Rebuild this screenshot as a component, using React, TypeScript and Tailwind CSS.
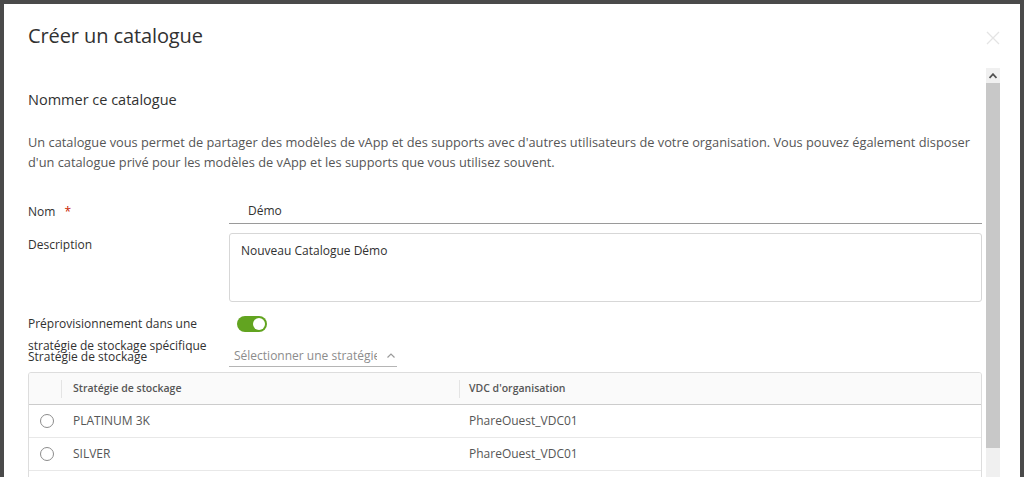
import React from 'react';

const font = { fontFamily: '"Open Sans", "Liberation Sans", sans-serif' };

const rows = [
  { name: 'PLATINUM 3K', vdc: 'PhareOuest_VDC01' },
  { name: 'SILVER', vdc: 'PhareOuest_VDC01' },
  { name: 'GOLD', vdc: 'PhareOuest_VDC01' },
];

const App = () => {
  return (
    <div className="w-[1024px] h-[477px] overflow-hidden bg-[#4a4a4a] pt-[4px] px-[4px]" style={font}>
      <div className="bg-white h-[500px] flex flex-col">
        {/* Header */}
        <div className="h-[64px] shrink-0 flex items-center justify-between pl-[24px] pr-[20px]">
          <h1 className="text-[20px] text-[#313131] font-normal tracking-[-0.1px]">Créer un catalogue</h1>
          <svg width="14" height="14" viewBox="0 0 14 14" className="mt-[4px]">
            <path d="M1 1 L13 13 M13 1 L1 13" stroke="#e4e4e4" strokeWidth="1.3" />
          </svg>
        </div>

        {/* Body */}
        <div className="flex flex-1 min-h-0">
          <div className="flex-1 pl-[24px] pr-[4px] text-[#565656]">
            <h2 className="text-[14.5px] text-[#313131] mt-[22px] leading-[20px]">Nommer ce catalogue</h2>
            <p className="text-[12.8px] leading-[20px] mt-[22px] pr-[6px]">
              Un catalogue vous permet de partager des modèles de vApp et des supports avec d'autres utilisateurs de
              votre organisation. Vous pouvez également disposer d'un catalogue privé pour les modèles de vApp et les
              supports que vous utilisez souvent.
            </p>

            {/* Form */}
            <div className="mt-[30px] text-[12px] text-[#313131]">
              <div className="flex items-start h-[22px]">
                <div className="w-[201px] leading-[20px]">
                  Nom <span className="text-[#c92100] ml-[6px]">*</span>
                </div>
                <div className="flex-1 border-b border-[#9a9a9a] h-[22px] pl-[19px] leading-[18px]">Démo</div>
              </div>

              <div className="flex mt-[9px]">
                <div className="w-[201px] leading-[20px] pt-[2px]">Description</div>
                <div className="flex-1 h-[69px] border border-[#d7d7d7] rounded-[3px] pl-[11px] pt-[8px] leading-[18px]">
                  Nouveau Catalogue Démo
                </div>
              </div>

              <div className="flex mt-[14px]">
                <div className="w-[209px] leading-[22px] mt-[-3px]">
                  Préprovisionnement dans une stratégie de stockage spécifique
                </div>
                <div>
                  <div className="w-[30px] h-[16px] rounded-full bg-[#62a420] flex items-center justify-end pr-[2px]">
                    <div className="w-[12px] h-[12px] rounded-full bg-white" />
                  </div>
                </div>
              </div>

              <div className="flex mt-[-7px] h-[22px]">
                <div className="w-[201px] leading-[14px]">Stratégie de stockage</div>
                <div className="w-[168px] border-b border-[#b5b5b5] flex items-start justify-between pl-[5px] pr-[1px] mt-[-3px] h-[20px]">
                  <span className="text-[#8c8c8c] leading-[18px] whitespace-nowrap overflow-hidden w-[143px]">Sélectionner une stratégie</span>
                  <svg width="10" height="10" viewBox="0 0 10 10" className="mt-[4px]">
                    <path d="M1.5 6.5 L5 3 L8.5 6.5" stroke="#9a9a9a" strokeWidth="1.2" fill="none" />
                  </svg>
                </div>
              </div>

              {/* Table */}
              <div className="border border-[#dddddd] rounded-[3px] overflow-hidden">
                <div className="flex h-[32px] bg-[#fafafa] border-b border-[#cccccc] items-center text-[10.5px] font-semibold text-[#565656]">
                  <div className="w-[32px] h-full" />
                  <div className="w-[398px] h-[18px] border-l border-[#e4e4e4] pl-[11px] flex items-center">Stratégie de stockage</div>
                  <div className="flex-1 h-[18px] border-l border-[#e4e4e4] pl-[9px] flex items-center">VDC d'organisation</div>
                </div>
                {rows.map((r) => (
                  <div key={r.name} className="flex h-[33px] items-center border-b border-[#e8e8e8] text-[12px] text-[#565656]">
                    <div className="w-[32px] flex justify-center pl-[3px]">
                      <div className="w-[14px] h-[14px] rounded-full border border-[#8c8c8c] bg-white" />
                    </div>
                    <div className="w-[398px] pl-[12px]">{r.name}</div>
                    <div className="flex-1 pl-[10px]">{r.vdc}</div>
                  </div>
                ))}
              </div>
            </div>
          </div>

          {/* Scrollbar */}
          <div className="w-[14px] flex flex-col mr-[20px]">
            <div className="h-[15px] bg-[#f0f0f0] flex items-center justify-center">
              <svg width="8" height="6" viewBox="0 0 8 6">
                <path d="M0.5 5 L4 1.2 L7.5 5" stroke="#505050" strokeWidth="1.8" fill="none" />
              </svg>
            </div>
            <div className="h-[365px] bg-[#c8c8c8]" />
            <div className="flex-1 bg-[#f0f0f0]" />
          </div>
        </div>
      </div>
    </div>
  );
};

export default App;
